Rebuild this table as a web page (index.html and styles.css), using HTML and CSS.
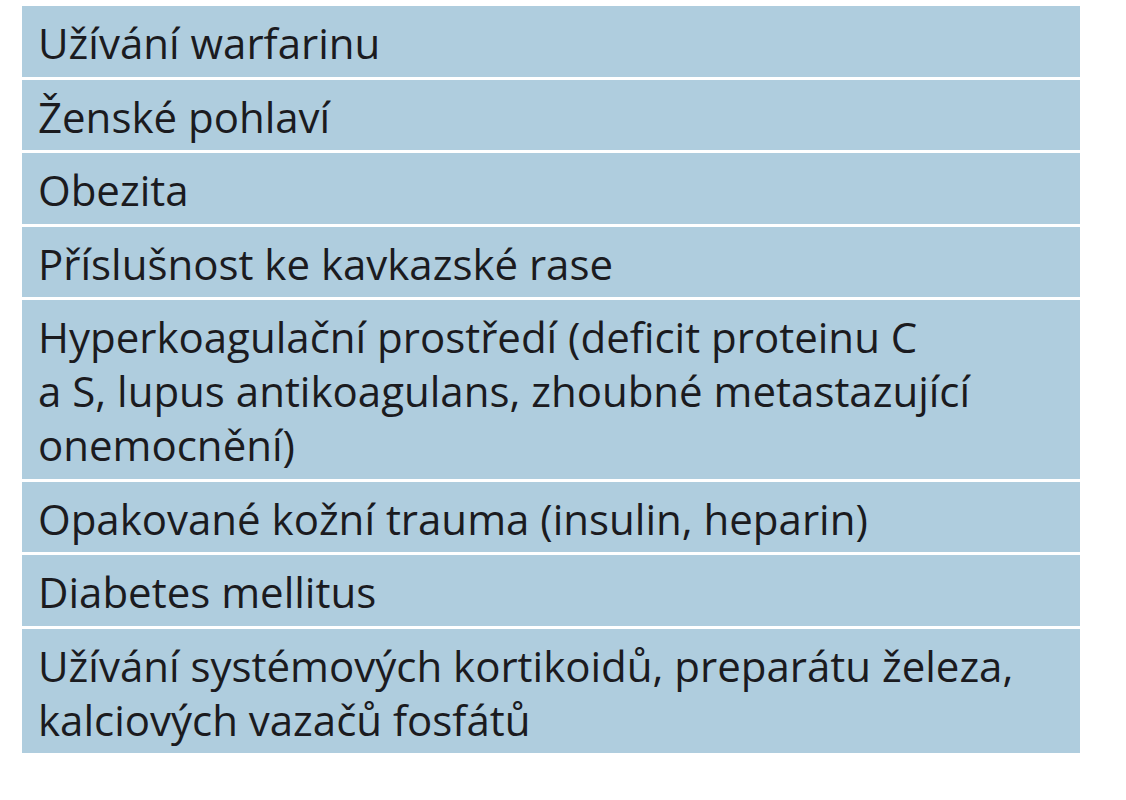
FILE: index.html
```html
<!DOCTYPE html>
<html lang="cs">
<head>
<meta charset="utf-8">
<title>Rizikové faktory</title>
<link rel="stylesheet" href="styles.css">
</head>
<body>
<div class="table">
  <div class="row">Užívání warfarinu</div>
  <div class="row">Ženské pohlaví</div>
  <div class="row">Obezita</div>
  <div class="row">Příslušnost ke kavkazské rase</div>
  <div class="row">Hyperkoagulační prostředí (deficit proteinu C<br>a S, lupus antikoagulans, zhoubné metastazující<br>onemocnění)</div>
  <div class="row">Opakované kožní trauma (insulin, heparin)</div>
  <div class="row">Diabetes mellitus</div>
  <div class="row">Užívání systémových kortikoidů, preparátu železa,<br>kalciových vazačů fosfátů</div>
</div>
</body>
</html>
```
FILE: styles.css
```css
html, body {
  margin: 0;
  padding: 0;
  background: #ffffff;
}
body {
  padding: 6px 0 0 22px;
}
.table {
  width: 1058px;
  display: flex;
  flex-direction: column;
  gap: 3px;
}
.row {
  background: #afcdde;
  padding: 10px 15px 6.5px 16px;
  font-family: "Open Sans", "Noto Sans", sans-serif;
  font-size: 42px;
  line-height: 54px;
  color: #1b1b1f;
  white-space: nowrap;
}
```
